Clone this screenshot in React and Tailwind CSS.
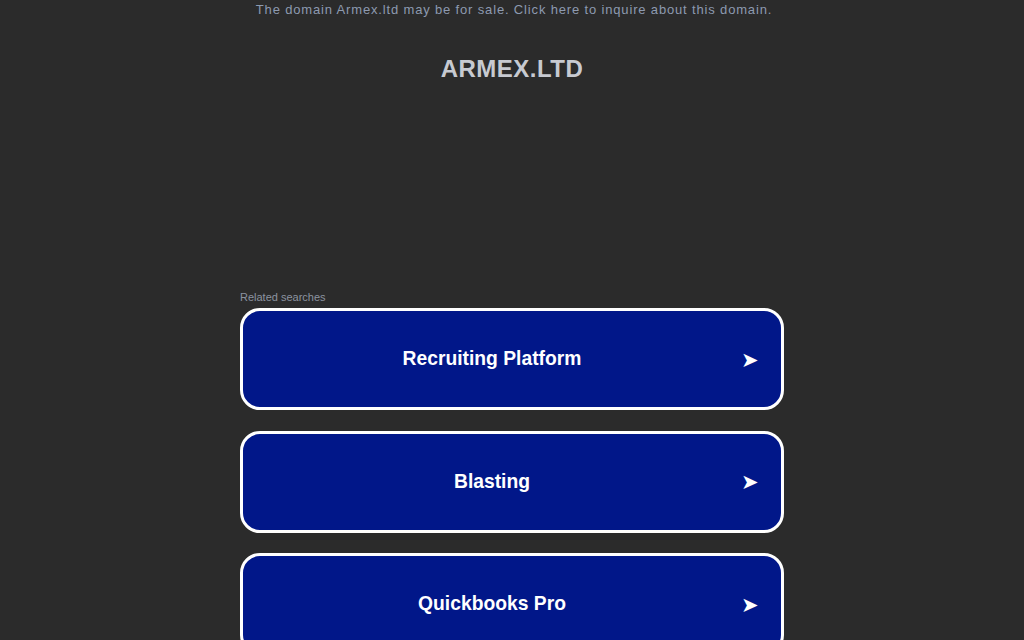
export default function App() {
  const searches = ['Recruiting Platform', 'Blasting', 'Quickbooks Pro'];

  return (
    <div className="min-h-screen w-full bg-[#2b2b2b] font-['Liberation_Sans',Arial,sans-serif]">
      <div className="pt-[1px] pl-[4px] text-center text-[13px] leading-[18px] tracking-[0.84px] text-[#8d9ab0]">
        The domain Armex.ltd may be for sale. Click here to inquire about this domain.
      </div>
      <h1 className="mt-[36px] text-center text-[24px] font-bold leading-[28px] tracking-[0.5px] text-[#c7cad1]">ARMEX.LTD</h1>
      <div className="mx-auto mt-[208px] w-[544px]">
        <div className="mb-[4px] text-[11px] leading-[13px] text-[#8c93a0]">Related searches</div>
        <div className="flex flex-col gap-[20.5px]">
          {searches.map(s => (
            <div
              key={s}
              className="flex h-[102px] items-center rounded-[20px] border-[3px] border-white bg-[#011789]"
            >
              <span className="flex-1 pt-[1px] text-center text-[19.3px] font-bold text-white">{s}</span>
              <span className="mr-[22px] w-[18px] text-[21px] leading-none text-white">➤</span>
            </div>
          ))}
        </div>
      </div>
    </div>
  );
}
